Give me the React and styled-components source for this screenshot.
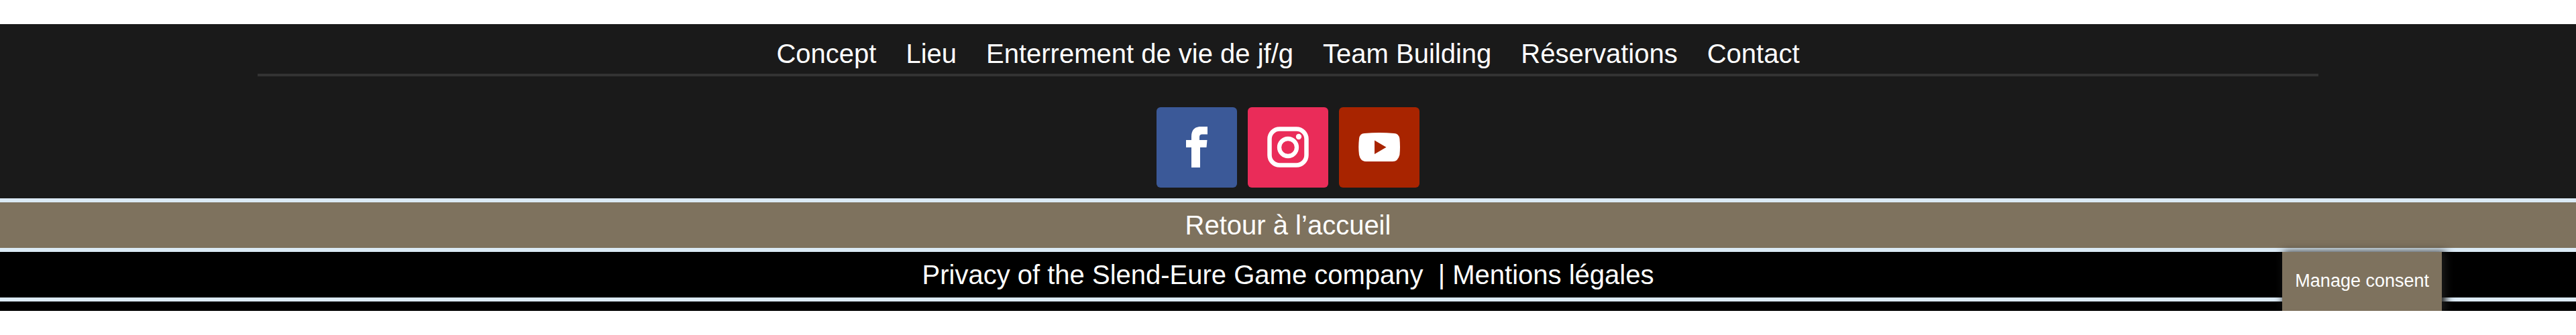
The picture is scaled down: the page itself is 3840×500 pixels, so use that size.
import React from 'react';
import styled, { createGlobalStyle } from 'styled-components';

const GlobalStyle = createGlobalStyle`
  *, *::before, *::after { box-sizing: border-box; }
  body {
    margin: 0;
    background: #fff;
    color: #fff;
    font-family: Arial, "Liberation Sans", sans-serif;
    font-size: 40px;
    line-height: 68px;
  }
`;

const Footer = styled.footer`
  position: relative;
  margin-top: 36px;
  padding-bottom: 14px;
  background: #000;
  overflow: hidden;
`;

const Top = styled.div`
  padding: 14px 0 16px;
  background: #1a1a1a;
`;

const Nav = styled.nav`
  width: 80%;
  margin: 0 auto;
  border-bottom: 4px solid #333;
`;

const NavList = styled.ul`
  display: flex;
  justify-content: center;
  gap: 44px;
  margin: 0;
  padding: 0;
  list-style: none;
  line-height: 60px;
`;

const Link = styled.a`
  color: inherit;
  text-decoration: none;
`;

const Socials = styled.div`
  display: flex;
  justify-content: center;
  gap: 16px;
  padding-top: 46px;
`;

const SocialLink = styled.a`
  display: flex;
  width: 120px;
  height: 120px;
  border-radius: 6px;
  color: #fff;
  background: ${(p) => p.$color};

  svg { width: 100%; height: 100%; }
`;

const Bar = styled.div`
  border-top: 6px solid #dbeaf5;
  background: ${(p) => p.$color};
  text-align: center;
  white-space: pre-wrap;
  &:nth-of-type(3) { border-bottom: 6px solid #dbeaf5; }
`;

const ConsentButton = styled.button`
  position: absolute;
  right: 200px;
  bottom: 0;
  height: 88px;
  padding: 0 19px 2px;
  border: 0;
  background: #7e725e;
  color: #fff;
  font: 27px/36px Arial, "Liberation Sans", sans-serif;
  box-shadow: 4px 2px 12px 2px #1a1a1a;
`;

const links = ['Concept', 'Lieu', 'Enterrement de vie de jf/g', 'Team Building', 'Réservations', 'Contact'];

const FacebookIcon = () => (
  <svg viewBox="0 0 120 120" fill="currentColor" aria-hidden="true">
    <path d="M52 90V60H44V49H52V44C52 35 56 29 66 29H76V40.500H68Q64 40.500 64 44.500V49H75.500L74.500 60H65V90Z" />
  </svg>
);

const InstagramIcon = () => (
  <svg viewBox="0 0 120 120" aria-hidden="true">
    <rect x="32.500" y="32.500" width="55" height="54" rx="15" fill="none" stroke="currentColor" strokeWidth="6.500" />
    <circle cx="60" cy="60" r="13" fill="none" stroke="currentColor" strokeWidth="6.300" />
    <circle cx="76" cy="44" r="4.200" fill="currentColor" />
  </svg>
);

const YoutubeIcon = () => (
  <svg viewBox="0 0 120 120" aria-hidden="true">
    <path fill="currentColor" fillRule="evenodd" d="M38 39Q60 37 82 39Q89 39 90.400 47Q91.600 60 90.400 71Q88 81 80 81H40Q32 81 30 71Q28.500 60 30 47Q31 39 38 39ZM53 49.500V70L70.500 59.700Z" />
  </svg>
);

export default function App() {
  return (
    <>
      <GlobalStyle />
      <Footer>
        <Top>
          <Nav>
            <NavList>
              {links.map((label) => (
                <li key={label}><Link href="#">{label}</Link></li>
              ))}
            </NavList>
          </Nav>
          <Socials>
            <SocialLink href="#" aria-label="Facebook" $color="#3b5998"><FacebookIcon /></SocialLink>
            <SocialLink href="#" aria-label="Instagram" $color="#ea2c59"><InstagramIcon /></SocialLink>
            <SocialLink href="#" aria-label="YouTube" $color="#a82400"><YoutubeIcon /></SocialLink>
          </Socials>
        </Top>
        <Bar $color="#7e725e"><Link href="#">Retour à l’accueil</Link></Bar>
        <Bar $color="#000">
          <Link href="#">Privacy of the Slend-Eure Game company</Link>{'  | '}<Link href="#">Mentions légales</Link>
        </Bar>
        <ConsentButton type="button">Manage consent</ConsentButton>
      </Footer>
    </>
  );
}
